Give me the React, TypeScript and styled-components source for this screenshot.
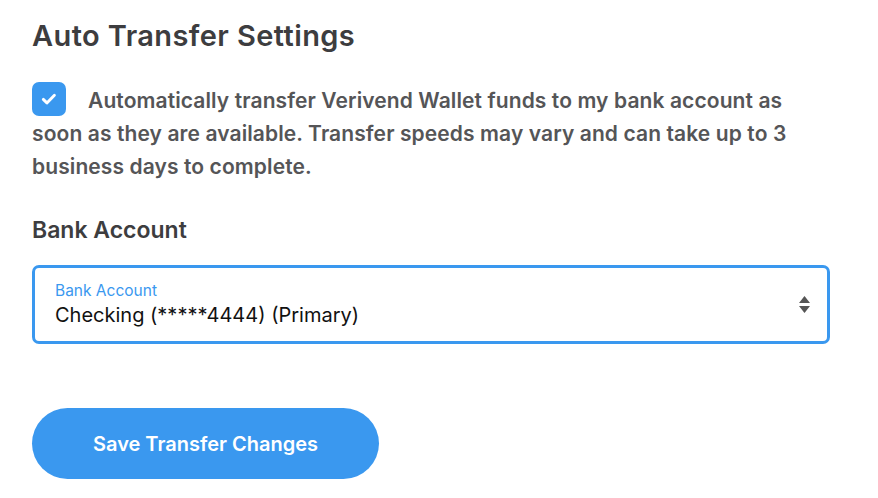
import React, { useState } from 'react';
import styled, { createGlobalStyle } from 'styled-components';

const GlobalStyle = createGlobalStyle`
  body {
    margin: 0;
    background: #ffffff;
    font-family: Inter, "Liberation Sans", sans-serif;
  }
`;

const Page = styled.div`
  padding: 18px 48px 20px 32px;
  display: flex;
  flex-direction: column;
`;

const Title = styled.h1`
  margin: 0;
  font-size: 29px;
  line-height: 36px;
  font-weight: 600;
  color: #3d3d3f;
  letter-spacing: 0.4px;
`;

const Description = styled.p`
  margin: 28px 0 0;
  font-size: 21px;
  line-height: 33px;
  font-weight: 600;
  color: #555557;
  letter-spacing: 0.1px;
`;

const CheckBox = styled.span<{ checked: boolean }>`
  display: inline-flex;
  align-items: center;
  justify-content: center;
  vertical-align: baseline;
  width: 34px;
  height: 34px;
  margin-right: 22px;
  box-sizing: border-box;
  border-radius: 7px;
  background: ${({ checked }) => (checked ? '#3a98ef' : '#ffffff')};
  border: ${({ checked }) => (checked ? 'none' : '2px solid #c4c4c4')};
  cursor: pointer;
`;

const SectionTitle = styled.h2`
  margin: 32px 0 0;
  font-size: 23px;
  line-height: 30px;
  font-weight: 600;
  color: #3d3d3f;
`;

const SelectField = styled.label`
  margin-top: 20px;
  display: flex;
  align-items: center;
  height: 79px;
  box-sizing: border-box;
  border: 3px solid #3a98ef;
  border-radius: 7px;
  padding: 0 17px 0 20px;
  cursor: pointer;
`;

const SelectText = styled.div`
  flex: 1;
  display: flex;
  flex-direction: column;
  gap: 2px;
`;

const FieldLabel = styled.span`
  font-size: 15.5px;
  line-height: 18px;
  color: #3a98ef;
`;

const FieldValue = styled.span`
  font-size: 20px;
  line-height: 26px;
  color: #111111;
`;

const SaveButton = styled.button`
  margin-top: 64px;
  align-self: flex-start;
  width: 347px;
  height: 71px;
  border: none;
  border-radius: 36px;
  background: #3a98ef;
  color: #ffffff;
  font-family: inherit;
  font-size: 20px;
  font-weight: 600;
  cursor: pointer;
`;

const CheckIcon = () => (
  <svg width="18" height="18" viewBox="0 0 18 18" fill="none">
    <path d="M3.3 9.4l3.6 3.5 7.5-7.6" stroke="#fff" strokeWidth="2.9" strokeLinecap="round" strokeLinejoin="round" />
  </svg>
);

const SortIcon = () => (
  <svg width="11" height="17" viewBox="0 0 11 17">
    <path d="M5.5 0L11 7H0Z" fill="#555" />
    <path d="M5.5 17L11 10H0Z" fill="#555" />
  </svg>
);

export default function App() {
  const [auto, setAuto] = useState(true);

  return (
    <>
      <GlobalStyle />
      <Page>
        <Title>Auto Transfer Settings</Title>
        <Description>
          <CheckBox checked={auto} onClick={() => setAuto(!auto)}>
            {auto && <CheckIcon />}
          </CheckBox>
          Automatically transfer Verivend Wallet funds to my bank account as soon as they are
          available. Transfer speeds may vary and can take up to 3 business days to complete.
        </Description>
        <SectionTitle>Bank Account</SectionTitle>
        <SelectField>
          <SelectText>
            <FieldLabel>Bank Account</FieldLabel>
            <FieldValue>Checking (*****4444) (Primary)</FieldValue>
          </SelectText>
          <SortIcon />
        </SelectField>
        <SaveButton>Save Transfer Changes</SaveButton>
      </Page>
    </>
  );
}
